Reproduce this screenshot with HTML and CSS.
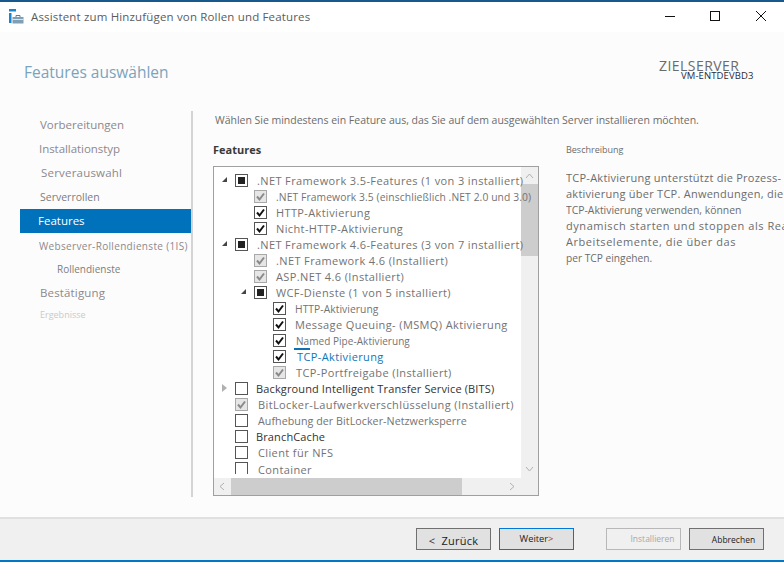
FILE: index.html
```html
<!DOCTYPE html>
<html lang="de">
<head>
<meta charset="utf-8">
<title>Assistent zum Hinzufügen von Rollen und Features</title>
<link rel="stylesheet" href="styles.css">
</head>
<body>
<div class="window">
  <header class="titlebar">
    <svg class="app-icon" width="15" height="15" viewBox="0 0 15 15">
      <rect x="0" y="0" width="7" height="2.500" fill="#1a86d0"/>
      <rect x="0" y="4" width="2.500" height="10" fill="#1a86d0"/>
      <rect x="3.500" y="8" width="11" height="6.500" fill="#7f9fb4"/>
      <path d="M7 8V6.500h4V8" fill="none" stroke="#5d7f96" stroke-width="1"/>
      <rect x="3.500" y="10" width="11" height="1" fill="#d8e4ec"/>
    </svg>
    <span class="title-text">Assistent zum Hinzufügen von Rollen und Features</span>
    <div class="controls">
      <svg width="12" height="12" viewBox="0 0 12 12"><path d="M1 6.500h10" stroke="#111" fill="none"/></svg>
      <svg width="12" height="12" viewBox="0 0 12 12"><rect x="1.500" y="1.500" width="9" height="9" stroke="#111" fill="none"/></svg>
      <svg width="12" height="12" viewBox="0 0 12 12"><path d="M1 1l10 10M11 1L1 11" stroke="#111" fill="none"/></svg>
    </div>
  </header>

  <div class="pagehead">
    <h1 class="page-title">Features auswählen</h1>
    <div class="target">
      <div class="target-label">ZIELSERVER</div>
      <div class="target-name">VM-ENTDEVBD3</div>
    </div>
  </div>

  <div class="main">
    <nav class="nav">
      <div class="nav-item nav-a">Vorbereitungen</div>
      <div class="nav-item nav-b">Installationstyp</div>
      <div class="nav-item nav-c">Serverauswahl</div>
      <div class="nav-item nav-d">Serverrollen</div>
      <div class="nav-item nav-active">Features</div>
      <div class="nav-item nav-e">Webserver-Rollendienste (1IS)</div>
      <div class="nav-item nav-f">Rollendienste</div>
      <div class="nav-item nav-g">Bestätigung</div>
      <div class="nav-item nav-h">Ergebnisse</div>
    </nav>

    <section class="content">
      <p class="intro">Wählen Sie mindestens ein Feature aus, das Sie auf dem ausgewählten Server installieren möchten.</p>
      <div class="columns">
        <div class="features">
          <h2 class="features-head">Features</h2>
          <div class="treebox">
            <div class="tree">
              <div class="row l0"><span class="exp open"></span><span class="cb partial"></span><span class="lbl t-l0a">.NET Framework 3.5-Features (1 von 3 installiert)</span></div>
              <div class="row l1"><span class="cb checked off"><svg viewBox="0 0 13 13"><path d="M3 6.500l2.500 3L10 3.500"/></svg></span><span class="lbl t-s t-wide">.NET Framework 3.5 (einschließlich .NET 2.0 und 3.0)</span></div>
              <div class="row l1"><span class="cb checked"><svg viewBox="0 0 13 13"><path d="M3 6.500l2.500 3L10 3.500"/></svg></span><span class="lbl t-m">HTTP-Aktivierung</span></div>
              <div class="row l1"><span class="cb checked"><svg viewBox="0 0 13 13"><path d="M3 6.500l2.500 3L10 3.500"/></svg></span><span class="lbl t-m">Nicht-HTTP-Aktivierung</span></div>
              <div class="row l0"><span class="exp open"></span><span class="cb partial"></span><span class="lbl t-l0a">.NET Framework 4.6-Features (3 von 7 installiert)</span></div>
              <div class="row l1"><span class="cb checked off"><svg viewBox="0 0 13 13"><path d="M3 6.500l2.500 3L10 3.500"/></svg></span><span class="lbl t-m">.NET Framework 4.6 (Installiert)</span></div>
              <div class="row l1"><span class="cb checked off"><svg viewBox="0 0 13 13"><path d="M3 6.500l2.500 3L10 3.500"/></svg></span><span class="lbl t-m">ASP.NET 4.6 (Installiert)</span></div>
              <div class="row l1b"><span class="exp open"></span><span class="cb partial"></span><span class="lbl t-m">WCF-Dienste (1 von 5 installiert)</span></div>
              <div class="row l2"><span class="cb checked"><svg viewBox="0 0 13 13"><path d="M3 6.500l2.500 3L10 3.500"/></svg></span><span class="lbl t-s t-http">HTTP-Aktivierung</span></div>
              <div class="row l2"><span class="cb checked"><svg viewBox="0 0 13 13"><path d="M3 6.500l2.500 3L10 3.500"/></svg></span><span class="lbl t-m">Message Queuing- (MSMQ) Aktivierung</span></div>
              <div class="row l2"><span class="cb checked"><svg viewBox="0 0 13 13"><path d="M3 6.500l2.500 3L10 3.500"/></svg></span><span class="lbl t-s underline">Named Pipe-Aktivierung</span></div>
              <div class="row l2"><span class="cb checked"><svg viewBox="0 0 13 13"><path d="M3 6.500l2.500 3L10 3.500"/></svg></span><span class="lbl t-m t-link">TCP-Aktivierung</span></div>
              <div class="row l2"><span class="cb checked off"><svg viewBox="0 0 13 13"><path d="M3 6.500l2.500 3L10 3.500"/></svg></span><span class="lbl t-m t-in2">TCP-Portfreigabe (Installiert)</span></div>
              <div class="row l0"><span class="exp closed"></span><span class="cb"></span><span class="lbl t-dark">Background Intelligent Transfer Service (BITS)</span></div>
              <div class="row l0n"><span class="cb checked off"><svg viewBox="0 0 13 13"><path d="M3 6.500l2.500 3L10 3.500"/></svg></span><span class="lbl t-m t-in2">BitLocker-Laufwerkverschlüsselung (Installiert)</span></div>
              <div class="row l0n"><span class="cb"></span><span class="lbl t-aufh">Aufhebung der BitLocker-Netzwerksperre</span></div>
              <div class="row l0n"><span class="cb"></span><span class="lbl t-dark">BranchCache</span></div>
              <div class="row l0n"><span class="cb"></span><span class="lbl t-m t-in2">Client für NFS</span></div>
              <div class="row l0n"><span class="cb cb-cut"></span><span class="lbl t-m t-in2 t-last">Container</span></div>
            </div>
            <div class="vscroll">
              <svg class="arrow" width="9" height="6" viewBox="0 0 9 6"><path d="M1 5l3.500-4L8 5"/></svg>
              <div class="vthumb"></div>
              <svg class="arrow arrow-end" width="9" height="6" viewBox="0 0 9 6"><path d="M1 1l3.500 4L8 1"/></svg>
            </div>
            <div class="hscroll">
              <svg class="arrow" width="6" height="9" viewBox="0 0 6 9"><path d="M5 1L1 4.500 5 8"/></svg>
              <div class="hthumb"></div>
              <svg class="arrow arrow-end" width="6" height="9" viewBox="0 0 6 9"><path d="M1 1l4 3.500L1 8"/></svg>
            </div>
            <div class="corner"></div>
          </div>
        </div>
        <aside class="desc">
          <h3 class="desc-head">Beschreibung</h3>
          <p class="desc-line">TCP-Aktivierung unterstützt die Prozess-</p>
          <p class="desc-line">aktivierung über TCP. Anwendungen, die</p>
          <p class="desc-line desc-small">TCP-Aktivierung verwenden, können</p>
          <p class="desc-line desc-wide">dynamisch starten und stoppen als Reaktion auf</p>
          <p class="desc-line desc-wide">Arbeitselemente, die über das</p>
          <p class="desc-line desc-small desc-out">per TCP eingehen.</p>
        </aside>
      </div>
    </section>
  </div>

  <footer class="footer">
    <button class="btn btn-back"><span class="lt">&lt;</span> Zurück</button>
    <button class="btn btn-next">Weiter<span class="gt">&gt;</span></button>
    <button class="btn btn-disabled">Installieren</button>
    <button class="btn btn-cancel">Abbrechen</button>
  </footer>
</div>
</body>
</html>
```
FILE: styles.css
```css
* { box-sizing: border-box; }
html, body { margin: 0; padding: 0; }
body { width: 784px; height: 562px; overflow: hidden; background: #fcfcfc; font-family: "Open Sans", "Liberation Sans", sans-serif; color: #737373; }
.window { width: 784px; height: 562px; display: flex; flex-direction: column; border-top: 2px solid #17598c; overflow: hidden; }

.titlebar { height: 30px; flex: none; background: #fff; display: flex; align-items: center; padding: 0 0 2px 9px; }
.app-icon { flex: none; margin-right: 7px; }
.title-text { font-size: 11.500px; color: #5c5c5c; letter-spacing: .16px; }
.controls { margin-left: auto; margin-right: 17px; display: flex; gap: 33px; }
.controls svg:last-child { margin-left: 1px; }

.pagehead { height: 79px; flex: none; position: relative; padding: 29px 0 0 24px; }
.page-title { margin: 0; font-size: 15.500px; font-weight: 400; color: #7aa3bc; letter-spacing: 0; line-height: 22px; }
.target { position: absolute; left: 659px; top: 27px; width: 110px; }
.target-label { font-size: 14px; color: #6a6a6a; line-height: 14px; letter-spacing: .45px; }
.target-name { font-size: 9.500px; color: #2a2a3a; line-height: 10px; margin-left: 22px; margin-top: -2px; letter-spacing: .1px; }

.main { flex: 1; display: flex; min-height: 0; }
.nav { width: 173px; margin-left: 20px; height: 386px; border-right: 2px solid #d4d4d4; padding-top: 2px; flex: none; }
.nav-item { height: 24px; line-height: 24px; font-size: 11.500px; color: #8e888c; white-space: nowrap; }
.nav-a { padding-left: 20px; }
.nav-b { padding-left: 19px; letter-spacing: -.05px; }
.nav-c { padding-left: 21px; letter-spacing: .2px; }
.nav-d { padding-left: 20px; font-size: 10.500px; color: #7c7c7c; }
.nav-active { width: 171px; background: #0072bc; color: #fff; padding-left: 18px; line-height: 23px; }
.nav-e { padding-left: 19px; font-size: 10px; letter-spacing: .33px; line-height: 26px; }
.nav-f { padding-left: 37px; font-size: 10px; color: #7c7c7c; }
.nav-g { padding-left: 20px; letter-spacing: .15px; }
.nav-h { padding-left: 20px; font-size: 9px; color: #cacaca; line-height: 20px; }

.content { flex: 1; min-width: 0; padding-left: 20px; overflow: hidden; }
.intro { margin: 0 0 0 2px; font-size: 10.500px; line-height: 18px; color: #6c6c6c; white-space: nowrap; letter-spacing: -.02px; }
.columns { display: flex; margin-top: 12px; }
.features { width: 326px; flex: none; }
.features-head { margin: 0 0 8px; font-size: 11px; font-weight: 700; color: #3a3a3a; line-height: 17px; }

.treebox { width: 326px; height: 330px; border: 1px solid #a0a0a0; background: #fff; display: grid; grid-template-columns: 307px 17px; grid-template-rows: 311px 17px; overflow: hidden; }
.tree { padding-top: 5px; position: relative; z-index: 1; min-width: 0; }
.row { height: 16px; display: flex; align-items: center; white-space: nowrap; }
.l0 { padding-left: 6px; }
.l0n { padding-left: 21px; }
.l1 { padding-left: 40px; }
.l1b { padding-left: 25px; }
.l2 { padding-left: 59px; }

.exp { width: 15px; flex: none; height: 8px; display: block; position: relative; }
.exp.open::before { content: ""; position: absolute; left: 2px; top: 1px; border-style: solid; border-width: 0 0 5px 5px; border-color: transparent transparent #444 transparent; }
.exp.closed::before { content: ""; position: absolute; left: 2px; top: 0; border-style: solid; border-width: 4px 0 4px 5px; border-color: transparent transparent transparent #b0b0b0; }

.cb { width: 13px; height: 13px; flex: none; border: 1px solid #555; background: #fff; display: flex; align-items: center; justify-content: center; margin-right: 8px; }
.cb svg { width: 13px; height: 13px; flex: none; margin: -1px; fill: none; stroke: #111; stroke-width: 2; }
.cb.partial::after { content: ""; width: 7px; height: 7px; background: #222; }
.cb.off { border-color: #a8a8a8; background: #e6e6e6; }
.cb.off svg { stroke: #8a8a8a; }
.cb-cut { border-bottom: 0; height: 12px; margin-top: -1px; }

.lbl { display: block; padding-top: 1px; margin-left: 1px; }
.t-l0a { font-size: 11px; letter-spacing: .38px; }
.t-m { font-size: 11px; letter-spacing: .38px; }
.t-s { font-size: 9.800px; letter-spacing: .05px; }
.t-wide { font-size: 10.300px; letter-spacing: .1px; }
.t-http { font-size: 10.300px; letter-spacing: .05px; }
.t-aufh { font-size: 10.700px; margin-left: 2px; letter-spacing: .05px; }
.t-in2 { margin-left: 2px; }
.t-last { padding-top: 3px; }
.t-link { color: #0e77b8; margin-left: 3px; }
.t-dark { color: #333; font-size: 11px; letter-spacing: .13px; margin-left: 0; }
.underline { position: relative; margin-left: 2px; font-size: 10px; letter-spacing: .05px; }
.underline::after { content: ""; position: absolute; left: -2px; bottom: -2px; width: 16px; height: 2px; background: #0e70b0; }

.vscroll { background: #f0f0f0; display: flex; flex-direction: column; align-items: center; position: relative; padding-top: 6px; }
.vthumb { position: absolute; left: 0; right: 0; top: 17px; height: 72px; background: #cdcdcd; }
.hscroll { background: #f0f0f0; display: flex; align-items: center; position: relative; padding: 0 6px 0 5px; grid-column: 1; z-index: 2; }
.hthumb { position: absolute; left: 17px; top: 0; bottom: 0; width: 231px; background: #cdcdcd; }
.corner { background: #f0f0f0; }
.arrow { fill: none; stroke: #b0b0b0; stroke-width: 1; flex: none; }
.arrow-end { margin-top: auto; margin-bottom: 6px; }
.hscroll .arrow-end { margin: 0 0 0 auto; }

.desc { margin-left: 27px; width: 218px; flex: none; white-space: nowrap; overflow: hidden; }
.desc-head { margin: 0 0 12px; font-size: 9px; font-weight: 400; color: #6c6c6c; line-height: 17px; }
.desc-line { margin: 0; height: 16px; line-height: 16px; font-size: 11px; letter-spacing: .25px; color: #6c6c6c; }
.desc-wide { letter-spacing: .55px; }
.desc-small { font-size: 10.400px; letter-spacing: 0; }
.desc-out { font-size: 10.200px; }

.footer { height: 45px; flex: none; margin-top: auto; background: #f0f0f0; border-top: 2px solid #e0e0e0; border-bottom: 2px solid #0078c8; display: flex; align-items: center; padding: 0 0 1px 416px; }
.btn { width: 75px; height: 22px; padding: 0; background: #e1e1e1; border: 1px solid #707070; font-family: inherit; font-size: 10px; color: #222; margin-right: 8px; }
.btn-back { font-size: 11px; letter-spacing: .25px; padding-top: 2px; }
.lt { color: #333; margin-right: 3px; }
.gt { color: #a04020; }
.btn-next { border-color: #0078d7; font-size: 9.300px; padding-bottom: 2px; }
.btn-disabled { margin-left: 24px; background: #f0f0f0; border-color: #b8b8b8; color: #a8a8a8; font-size: 8.500px; padding: 0 0 2px 18px; }
.btn-cancel { padding-left: 14px; font-size: 8.500px; }
```
